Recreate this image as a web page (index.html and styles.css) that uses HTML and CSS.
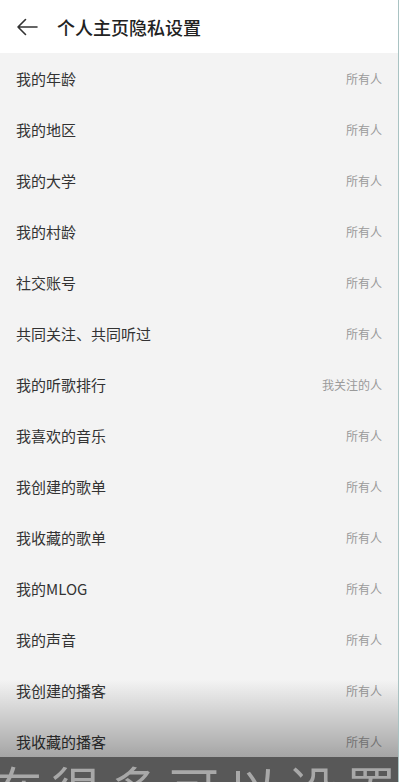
FILE: index.html
```html
<!DOCTYPE html>
<html lang="zh-CN">
<head>
    <meta charset="UTF-8">
    <meta name="viewport" content="width=device-width, initial-scale=1.0">
    <title>个人主页隐私设置</title>
    <link rel="stylesheet" href="styles.css">
</head>
<body>
    <div class="screen">
        <div class="header">
            <svg class="back-icon" width="22" height="18" viewBox="0 0 22 18">
                <path d="M21 9H2M9.5 1.5L2 9l7.5 7.5" fill="none" stroke="#333" stroke-width="1.6" stroke-linecap="round" stroke-linejoin="round"/>
            </svg>
            <h1>个人主页隐私设置</h1>
        </div>

        <div class="list">
            <div class="row"><span class="label">我的年龄</span><span class="value">所有人</span></div>
            <div class="row"><span class="label">我的地区</span><span class="value">所有人</span></div>
            <div class="row"><span class="label">我的大学</span><span class="value">所有人</span></div>
            <div class="row"><span class="label">我的村龄</span><span class="value">所有人</span></div>
            <div class="row"><span class="label">社交账号</span><span class="value">所有人</span></div>
            <div class="row"><span class="label">共同关注、共同听过</span><span class="value">所有人</span></div>
            <div class="row"><span class="label">我的听歌排行</span><span class="value">我关注的人</span></div>
            <div class="row"><span class="label">我喜欢的音乐</span><span class="value">所有人</span></div>
            <div class="row"><span class="label">我创建的歌单</span><span class="value">所有人</span></div>
            <div class="row"><span class="label">我收藏的歌单</span><span class="value">所有人</span></div>
            <div class="row"><span class="label">我的MLOG</span><span class="value">所有人</span></div>
            <div class="row"><span class="label">我的声音</span><span class="value">所有人</span></div>
            <div class="row"><span class="label">我创建的播客</span><span class="value">所有人</span></div>
            <div class="row"><span class="label">我收藏的播客</span><span class="value">所有人</span></div>
        </div>

        <!-- video caption overlay -->
        <div class="caption-shade"></div>
        <div class="caption">在很多可以设置</div>
    </div>
</body>
</html>
```

FILE: styles.css
```css
body {
    margin: 0;
    padding: 0;
    font-family: "Noto Sans CJK SC", "Noto Sans", sans-serif;
    background-color: #fff;
}
.screen {
    position: relative;
    width: 398px;
    height: 782px;
    overflow: hidden;
    background-color: #f3f3f3;
    border-right: 1px solid #a9c3c3;
}
.header {
    display: flex;
    align-items: center;
    height: 53px;
    padding-left: 16px;
    background-color: #fff;
}
.back-icon {
    margin-right: 19px;
}
.header h1 {
    margin: 0;
    font-size: 18px;
    font-weight: 500;
    color: #222;
}
.list {
    display: flex;
    flex-direction: column;
}
.row {
    display: flex;
    align-items: center;
    justify-content: space-between;
    height: 51px;
    padding: 0 16px 0 16px;
}
.label {
    font-size: 15px;
    color: #333;
}
.value {
    font-size: 12px;
    color: #9a9a9a;
}
.caption-shade {
    position: absolute;
    left: 0;
    right: 0;
    top: 680px;
    height: 77px;
    background: linear-gradient(rgba(0,0,0,0), rgba(0,0,0,0.32));
}
.caption {
    position: absolute;
    left: 0;
    right: 0;
    top: 757px;
    height: 25px;
    background-color: #585858;
    color: #a8a8a8;
    font-size: 50px;
    line-height: 60px;
    letter-spacing: 9px;
    white-space: nowrap;
    text-indent: -8px;
    overflow: hidden;
}
```
